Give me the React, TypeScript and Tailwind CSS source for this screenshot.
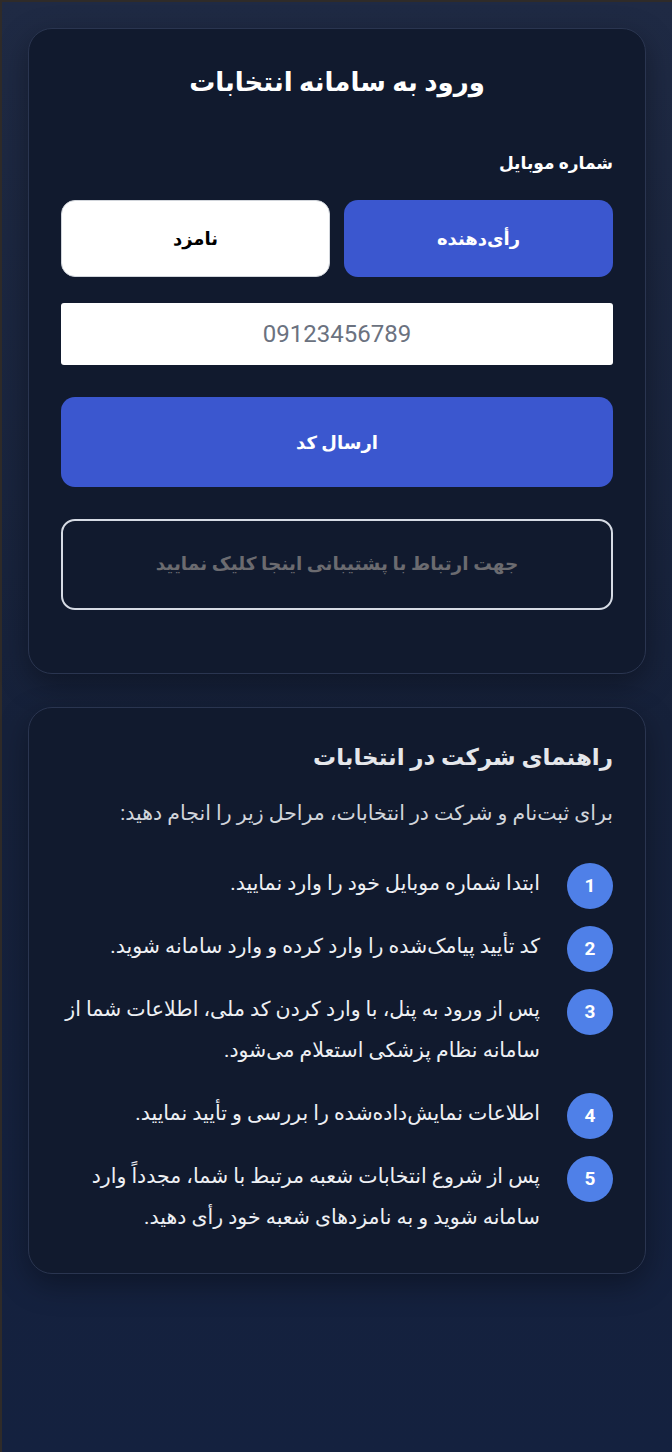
import React, { useState } from "react";

const steps = [
  "ابتدا شماره موبایل خود را وارد نمایید.",
  "کد تأیید پیامک‌شده را وارد کرده و وارد سامانه شوید.",
  "پس از ورود به پنل، با وارد کردن کد ملی، اطلاعات شما از سامانه نظام پزشکی استعلام می‌شود.",
  "اطلاعات نمایش‌داده‌شده را بررسی و تأیید نمایید.",
  "پس از شروع انتخابات شعبه مرتبط با شما، مجدداً وارد سامانه شوید و به نامزدهای شعبه خود رأی دهید.",
];

export default function App() {
  const [role, setRole] = useState<"voter" | "candidate">("voter");
  const [phone, setPhone] = useState("");

  return (
    <div
      dir="rtl"
      className="min-h-screen border-l-2 border-t-2 border-[#2f2b29] bg-gradient-to-b from-[#1f2a44] via-[#16213a] to-[#14213f] px-[26px] pb-[150px] pt-[26px] font-['Roboto','Noto_Sans','DejaVu_Sans',sans-serif]"
    >
      {/* Login card */}
      <div className="rounded-[24px] border border-[#2a3550] bg-[#111a2e] px-[32px] pb-[63px] pt-[28px] shadow-[0_10px_30px_rgba(0,0,0,0.35)]">
        <h1 className="text-center text-[26px] font-bold leading-[50px] text-white">ورود به سامانه انتخابات</h1>

        <label className="mt-[43px] block text-[17px] font-semibold leading-[26px] text-white">شماره موبایل</label>

        <div className="mt-[24px] grid grid-cols-2 gap-[14px]">
          <button
            onClick={() => setRole("voter")}
            className={
              role === "voter"
                ? "h-[77px] rounded-[14px] bg-[#3b57cf] text-[18px] font-semibold text-white"
                : "h-[77px] rounded-[14px] border border-[#d1d5db] bg-white text-[18px] font-semibold text-black"
            }
          >
            رأی‌دهنده
          </button>
          <button
            onClick={() => setRole("candidate")}
            className={
              role === "candidate"
                ? "h-[77px] rounded-[14px] bg-[#3b57cf] text-[18px] font-semibold text-white"
                : "h-[77px] rounded-[14px] border border-[#d1d5db] bg-white text-[18px] font-semibold text-black"
            }
          >
            نامزد
          </button>
        </div>

        <input
          dir="ltr"
          value={phone}
          onChange={(e) => setPhone(e.target.value)}
          placeholder="09123456789"
          className="mt-[26px] block h-[62px] w-full rounded-[3px] bg-white text-center text-[24px] text-[#111827] outline-none placeholder:text-[#6b7280]"
        />

        <button className="mt-[32px] block h-[90px] w-full rounded-[14px] bg-[#3b57cf] text-[18px] font-bold text-white">
          ارسال کد
        </button>

        <button className="mt-[32px] block h-[91px] w-full rounded-[14px] border-2 border-[#d6dbe4] text-[18.5px] font-bold text-[#6b6b70]">
          جهت ارتباط با پشتیبانی اینجا کلیک نمایید
        </button>
      </div>

      {/* Guide card */}
      <div className="mt-[33px] rounded-[24px] border border-[#2a3550] bg-[#111a2e] px-[32px] pb-[28px] pt-[32px] shadow-[0_10px_30px_rgba(0,0,0,0.35)]">
        <h2 className="text-[23px] font-bold leading-[36px] text-[#e5e7eb]">راهنمای شرکت در انتخابات</h2>
        <p className="mt-[22px] text-[20.5px] leading-[30px] text-[#d1d5db]">
          برای ثبت‌نام و شرکت در انتخابات، مراحل زیر را انجام دهید:
        </p>

        <ol className="mt-[35px] flex flex-col gap-[15px]">
          {steps.map((s, i) => (
            <li key={i} className="flex items-start gap-[27px]">
              <span className="flex h-[46px] w-[46px] shrink-0 items-center justify-center rounded-full bg-[#4f80e8] font-['Roboto',sans-serif] text-[19px] font-bold text-white">
                {i + 1}
              </span>
              <span className="pb-[7px] text-[20.5px] leading-[41px] text-[#eef0f4]">{s}</span>
            </li>
          ))}
        </ol>
      </div>
    </div>
  );
}
